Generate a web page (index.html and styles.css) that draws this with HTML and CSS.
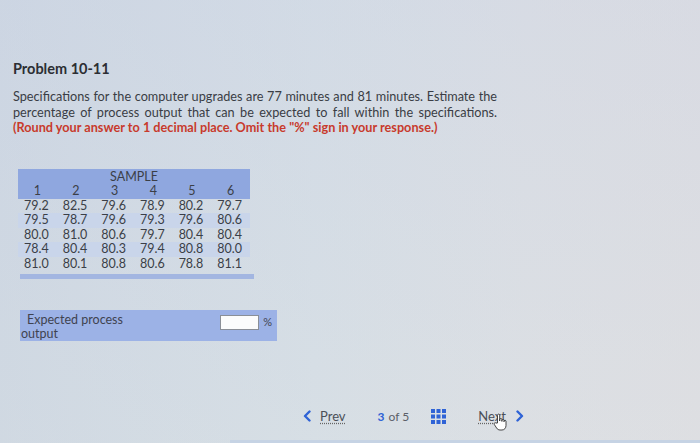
FILE: index.html
```html
<!DOCTYPE html>
<html lang="en">
<head>
<meta charset="utf-8">
<title>Problem 10-11</title>
<link rel="stylesheet" href="styles.css">
</head>
<body>
<main class="page">
  <h1 class="title">Problem 10-11</h1>
  <p class="question"><span class="line">Specifications for the computer upgrades are 77 minutes and 81 minutes. Estimate the</span> <span class="line">percentage of process output that can be expected to fall within the specifications.</span> <strong class="note">(Round your answer to 1 decimal place. Omit the "%" sign in your response.)</strong></p>

  <div class="data">
    <table class="samples">
      <thead>
        <tr><th colspan="6" class="caption">SAMPLE</th></tr>
        <tr class="nums"><th>1</th><th>2</th><th>3</th><th>4</th><th>5</th><th>6</th></tr>
      </thead>
      <tbody>
        <tr><td>79.2</td><td>82.5</td><td>79.6</td><td>78.9</td><td>80.2</td><td>79.7</td></tr>
        <tr class="alt"><td>79.5</td><td>78.7</td><td>79.6</td><td>79.3</td><td>79.6</td><td>80.6</td></tr>
        <tr><td>80.0</td><td>81.0</td><td>80.6</td><td>79.7</td><td>80.4</td><td>80.4</td></tr>
        <tr class="alt"><td>78.4</td><td>80.4</td><td>80.3</td><td>79.4</td><td>80.8</td><td>80.0</td></tr>
        <tr><td>81.0</td><td>80.1</td><td>80.8</td><td>80.6</td><td>78.8</td><td>81.1</td></tr>
      </tbody>
    </table>
    <div class="rule"></div>
  </div>

  <div class="answer">
    <label class="answer-label" for="ans"><span class="indent">Expected process</span><br>output</label>
    <div class="answer-field">
      <input id="ans" class="answer-input" type="text">
      <span class="unit">%</span>
    </div>
  </div>

  <nav class="pager">
    <a class="prev"><svg class="chev" viewBox="0 0 8 12" width="8" height="12"><path d="M6.5 1.5 L2 6 L6.5 10.5" fill="none" stroke="#2f63d6" stroke-width="2.4" stroke-linecap="round" stroke-linejoin="round"/></svg><span class="link">Prev</span></a>
    <span class="count"><b>3</b> of 5</span>
    <svg class="grid" viewBox="0 0 15 15" width="15" height="15">
      <rect x="0" y="0" width="4" height="4" fill="#2f63d6"/><rect x="5.5" y="0" width="4" height="4" fill="#2f63d6"/><rect x="11" y="0" width="4" height="4" fill="#2f63d6"/>
      <rect x="0" y="5.5" width="4" height="4" fill="#2f63d6"/><rect x="5.5" y="5.5" width="4" height="4" fill="#2f63d6"/><rect x="11" y="5.5" width="4" height="4" fill="#2f63d6"/>
      <rect x="0" y="11" width="4" height="4" fill="#2f63d6"/><rect x="5.5" y="11" width="4" height="4" fill="#2f63d6"/><rect x="11" y="11" width="4" height="4" fill="#2f63d6"/>
    </svg>
    <a class="next"><span class="link">Next</span><svg class="chev" viewBox="0 0 8 12" width="8" height="12"><path d="M1.5 1.5 L6 6 L1.5 10.5" fill="none" stroke="#2f63d6" stroke-width="2.4" stroke-linecap="round" stroke-linejoin="round"/></svg>
      <svg class="hand" viewBox="0 0 14 18" width="14" height="18"><path d="M4.5 10 V2.2 a1.1 1.1 0 0 1 2.2 0 V8 V6.6 a1.1 1.1 0 0 1 2.2 0 V8.4 V7.2 a1.1 1.1 0 0 1 2.1 0 V8.8 V8 a1.1 1.1 0 0 1 2 0 V12.5 c0 2.5 -1.6 4.5 -4 4.5 H7 c-1.6 0 -2.6 -0.8 -3.4 -2 L1.2 11.3 a1.1 1.1 0 0 1 1.8 -1.2 Z" fill="#fff" stroke="#333" stroke-width="0.9" stroke-linejoin="round"/></svg>
    </a>
  </nav>
  <div class="edge"></div>
</main>
</body>
</html>
```

FILE: styles.css
```css
html, body {
  margin: 0;
  padding: 0;
}
body {
  width: 700px;
  height: 443px;
  overflow: hidden;
  font-family: Lato, "Liberation Sans", Arial, sans-serif;
  color: #3a3d42;
  background:
    linear-gradient(180deg, rgba(205,214,228,0.35) 0%, rgba(220,228,226,0.25) 100%),
    linear-gradient(90deg, #ccd5e2 0%, #d5dde6 45%, #dcdee4 75%, #dedde2 100%);
}
.page {
  position: relative;
  height: 443px;
  padding: 61px 0 0 13px;
  box-sizing: border-box;
}
.title {
  margin: 0;
  font-size: 14.5px;
  line-height: 16px;
  font-weight: bold;
  color: #2c2e33;
}
.question {
  margin: 12px 0 0;
  width: 484px;
  font-size: 12.7px;
  line-height: 15.5px;
  color: #3a3d44;
}
.line {
  display: block;
  white-space: nowrap;
  text-align: justify;
  text-align-last: justify;
}
.note {
  display: block;
  white-space: nowrap;
  color: #c83a2c;
  font-weight: bold;
}
.data {
  margin: 33px 0 0 5px;
  width: 236px;
}
.samples {
  width: 232px;
  border-collapse: collapse;
  table-layout: fixed;
  font-size: 12.5px;
  color: #3b3f47;
}
.samples th {
  background: #8fa7df;
  font-weight: normal;
  padding: 0;
  line-height: 14px;
}
.samples .caption {
  padding-top: 1px;
}
.samples .nums th {
  padding-bottom: 1px;
}
.samples td {
  padding: 0 0 0 6px;
  line-height: 14.5px;
  text-align: left;
}
.samples tr.alt td {
  background: #c9d5ea;
}
.rule {
  margin: 3px 0 0 2px;
  height: 5px;
  background: #a3b6e1;
}
.answer {
  margin: 31px 0 0 7px;
  width: 257px;
  height: 31px;
  box-sizing: border-box;
  background: #9cb2e6;
  display: flex;
  align-items: flex-start;
  justify-content: space-between;
  padding: 3px 0 0 1px;
}
.answer-label {
  font-size: 12.5px;
  line-height: 14px;
  color: #3f4350;
}
.indent {
  padding-left: 6px;
}
.answer-field {
  display: flex;
  align-items: flex-start;
  gap: 4px;
  padding-top: 2px;
  padding-right: 5px;
}
.answer-input {
  width: 39px;
  height: 15px;
  box-sizing: border-box;
  border: 1px solid #8a8f97;
  background: #fbfcfc;
  margin: 0;
  padding: 0;
}
.unit {
  font-size: 11px;
  line-height: 13px;
  color: #3f4350;
}
.pager {
  margin: 67px 0 0 290px;
  display: flex;
  align-items: center;
  font-size: 13px;
  color: #555a62;
  height: 16px;
}
.prev, .next {
  display: flex;
  align-items: center;
  position: relative;
}
.prev .chev {
  margin-right: 9px;
}
.next .chev {
  margin-left: 10px;
}
.link {
  color: #4a4f58;
  text-decoration: underline dotted #666;
  text-underline-offset: 2px;
}
.count {
  margin-left: 32px;
  font-size: 12px;
  color: #5a5f68;
}
.count b {
  color: #2f63d6;
  margin-right: 1px;
}
.grid {
  margin-left: 22px;
}
.next {
  margin-left: 32px;
}
.hand {
  position: absolute;
  left: 15px;
  top: 5px;
}
.edge {
  position: absolute;
  left: 230px;
  right: 0;
  bottom: 0;
  height: 3px;
  background: #c6d3e4;
}
```
